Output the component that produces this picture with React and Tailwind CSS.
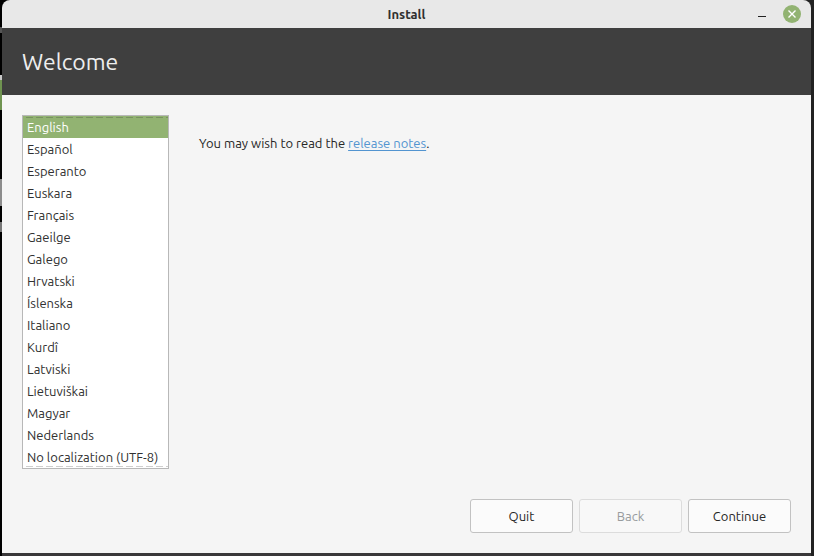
import { useState } from 'react';

const LANGUAGES = [
  'English',
  'Español',
  'Esperanto',
  'Euskara',
  'Français',
  'Gaeilge',
  'Galego',
  'Hrvatski',
  'Íslenska',
  'Italiano',
  'Kurdî',
  'Latviski',
  'Lietuviškai',
  'Magyar',
  'Nederlands',
  'No localization (UTF-8)',
];

const TitleBar = () => (
  <div className="grid h-7 grid-cols-[1fr_auto_1fr] items-center rounded-t-lg bg-[#e8e8e8] px-2.5">
    <span />
    <span className="pt-0.5 text-[13px] font-bold text-[#303030]">Install</span>
    <div className="flex items-center justify-end gap-[17px]">
      <button type="button" aria-label="Minimize" className="flex h-4 w-2 items-center">
        <svg viewBox="0 0 8 16" className="h-4 w-2">
          <path d="M0 10.5h8" stroke="#222" strokeWidth="1" />
        </svg>
      </button>
      <button type="button" aria-label="Close">
        <svg viewBox="0 0 18 18" className="block size-[18px]">
          <circle cx="9" cy="9" r="9" fill="#92b372" />
          <path d="M5.5 5.5l7 7M12.5 5.5l-7 7" stroke="#fff" strokeWidth="1.4" />
        </svg>
      </button>
    </div>
  </div>
);

const LanguageList = ({ value, onChange }) => (
  <div className="relative w-[147px] shrink-0 border border-[#b8b8b8] bg-white">
    <select
      size={LANGUAGES.length}
      aria-label="Language"
      value={value}
      onChange={(e) => onChange(e.target.value)}
      className="block w-full appearance-none overflow-hidden border-0 bg-white p-0 text-[#303030] outline-none"
    >
      {LANGUAGES.map((language) => (
        <option
          key={language}
          value={language}
          className="h-[22px] min-h-0 px-1 pt-1 pb-0 text-[13px] checked:bg-[#92b372] checked:bg-linear-to-r checked:from-[#92b372] checked:to-[#92b372] checked:text-white"
        >
          {language}
        </option>
      ))}
    </select>
    <div className="pointer-events-none absolute inset-x-0 top-px h-px bg-[repeating-linear-gradient(90deg,transparent_0_3px,#789260_3px_10px)]" />
    <div className="pointer-events-none absolute inset-x-0 bottom-px h-px bg-[repeating-linear-gradient(90deg,transparent_0_3px,#cfcfcf_3px_10px)]" />
  </div>
);

const DialogButton = ({ children, disabled = false }) => (
  <button
    type="button"
    disabled={disabled}
    className="h-[34px] w-[103px] rounded-[3px] border border-[#c2c2c2] bg-[#fbfbfb] pt-0.5 text-[13px] text-[#262626] disabled:border-[#dcdcdc] disabled:bg-[#f8f8f8] disabled:text-[#979b9d]"
  >
    {children}
  </button>
);

// sliver of the desktop that shows left of the window
const DesktopEdge = () => (
  <div className="flex w-0.5 shrink-0 flex-col">
    <div className="mt-[27px] h-1.5 bg-[#555]" />
    <div className="mt-[42px] h-[5px] bg-[#c8c8c8]" />
    <div className="h-[30px] bg-[#6f9350]" />
    <div className="mt-[69px] h-[27px] bg-[#8c8c8c]" />
    <div className="mt-4 h-2.5 bg-[#777]" />
  </div>
);

const App = () => {
  const [language, setLanguage] = useState('English');

  return (
    <div className="flex min-h-screen bg-linear-to-r from-black from-50% to-[#222] to-50% font-['Ubuntu','Noto_Sans',sans-serif]">
      <DesktopEdge />
      <div className="mr-[3px] flex min-w-0 flex-1 flex-col border-b-3 border-[#3a383a]">
        <TitleBar />
        <header className="flex h-[67px] items-center bg-[#3f3f3f] px-5 pt-0.5">
          <h1 className="text-[23px] text-[#eeeeee]">Welcome</h1>
        </header>
        <main className="flex flex-1 flex-col justify-between bg-[#f5f5f5] p-5">
          <div className="flex gap-[30px]">
            <LanguageList value={language} onChange={setLanguage} />
            <p className="pt-[18px] text-[13px] leading-5 text-[#262626]">
              You may wish to read the{' '}
              <a href="#release-notes" className="text-[#5294d0] underline underline-offset-2">
                release notes
              </a>
              .
            </p>
          </div>
          <div className="flex justify-end gap-1.5">
            <DialogButton>Quit</DialogButton>
            <DialogButton disabled>Back</DialogButton>
            <DialogButton>Continue</DialogButton>
          </div>
        </main>
      </div>
    </div>
  );
};

export default App;
